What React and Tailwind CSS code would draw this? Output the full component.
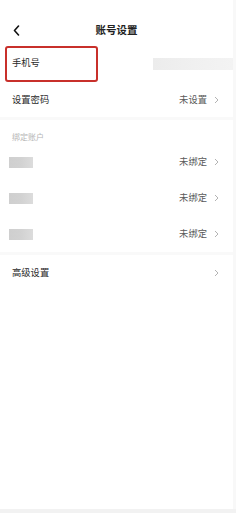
import React from "react";

const font = { fontFamily: '"Noto Sans CJK SC", "Noto Sans", sans-serif' };

function Chevron() {
  return (
    <svg width="5" height="8" viewBox="0 0 5 8" className="ml-[7px]">
      <path d="M1 1 L4 4 L1 7" fill="none" stroke="#aaa" strokeWidth="0.9" />
    </svg>
  );
}

function Row({ left, right, h = "h-[36px]" }) {
  return (
    <div className={`flex items-center ${h} pl-[12px] pr-[14px]`}>
      <div className="flex-1 flex items-center">{left}</div>
      {right && <span className="text-[9.3px] leading-none text-[#5a5a5a]">{right}</span>}
      <Chevron />
    </div>
  );
}

function Block() {
  return <div className="ml-[-3px] w-[24px] h-[11px] bg-gradient-to-r from-[#cfcfcf] via-[#d2d2d2] to-[#dcdcdc]" />;
}

export default function App() {
  return (
    <div className="w-[236px] min-h-[513px] flex flex-col bg-white" style={font}>
      <div className="flex flex-1">
        <div className="flex-1 flex flex-col">
          <div className="h-[20px]" />
          <div className="relative h-[20px] flex items-center justify-center">
            <svg width="7" height="11" viewBox="0 0 7 11" className="absolute left-[13px] top-[5px]">
              <path d="M5.5 1 L1.5 5.5 L5.5 10" fill="none" stroke="#111" strokeWidth="1.6" strokeLinecap="round" strokeLinejoin="round" />
            </svg>
            <span className="text-[10.5px] font-bold text-[#222] leading-none">账号设置</span>
          </div>
          <div className="relative h-[42px] pt-[4px] flex items-center pl-[12px]">
            <span className="text-[9.3px] leading-none text-[#2a2a2a]">手机号</span>
            <div className="ml-auto mt-[2px] w-[80px] h-[12px] bg-gradient-to-r from-[#ececec] via-[#f0f0f0] to-[#f3f3f3]" />
            <div className="absolute left-[5px] top-[6px] w-[93px] h-[36px] border-2 border-[#c8302b] rounded-[3px]" />
          </div>
          <Row h="h-[35px]" left={<span className="text-[9.3px] leading-none text-[#2a2a2a]">设置密码</span>} right="未设置" />
          <div className="h-[3px] bg-[#f9f9f9]" />
          <div className="h-[24px] pl-[12px] pt-[13px]">
            <span className="block text-[8px] leading-none text-[#b5b5b5]">绑定账户</span>
          </div>
          <Row left={<Block />} right="未绑定" />
          <Row left={<Block />} right="未绑定" />
          <Row left={<Block />} right="未绑定" />
          <div className="h-[3px] bg-[#f9f9f9]" />
          <Row left={<span className="text-[9.3px] leading-none text-[#2a2a2a]">高级设置</span>} />
          <div className="flex-1" />
        </div>
        <div className="w-[3px] bg-[#f8f8f8]" />
      </div>
      <div className="h-[4px] bg-[#f2f2f2]" />
    </div>
  );
}
